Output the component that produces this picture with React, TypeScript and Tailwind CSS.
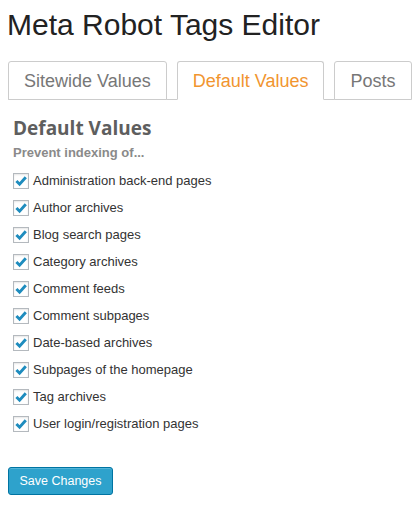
import { useState } from 'react';

const ITEMS = [
  'Administration back-end pages',
  'Author archives',
  'Blog search pages',
  'Category archives',
  'Comment feeds',
  'Comment subpages',
  'Date-based archives',
  'Subpages of the homepage',
  'Tag archives',
  'User login/registration pages',
];

const TABS = ['Sitewide Values', 'Default Values', 'Posts'];

export default function App() {
  const [tab, setTab] = useState(1);
  const [checked, setChecked] = useState<boolean[]>(ITEMS.map(() => true));

  const toggle = (i: number) =>
    setChecked((prev) => prev.map((v, j) => (j === i ? !v : v)));

  return (
    <div className="min-h-screen bg-white px-2 font-['Liberation_Sans',Arial,sans-serif]">
      {/* 제목 */}
      <h1 className="pt-[7px] text-[30px] leading-[36px] text-[#222] -ml-px whitespace-nowrap">Meta Robot Tags Editor</h1>

      {/* 탭 */}
      <div className="mt-[18px] flex gap-[10px] border-b border-[#ccc]">
        {TABS.map((t, i) => (
          <button
            key={t}
            onClick={() => setTab(i)}
            className={`-mb-px shrink-0 whitespace-nowrap rounded-t-[3px] border px-[15px] pt-[7px] pb-[6px] text-[18px] leading-[24px] ${
              tab === i
                ? 'border-[#ccc] border-b-white bg-white text-[#f1952f]'
                : 'border-[#ccc] bg-white text-[#777]'
            }`}
          >
            {t}
          </button>
        ))}
      </div>

      {/* 본문 */}
      <div className="pl-[5px]">
        <h2 className="mt-[16px] font-['Open_Sans',sans-serif] text-[19px] font-bold leading-[24px] text-[#5e5e5e]">
          Default Values
        </h2>
        <p className="mt-[5px] text-[13px] font-bold leading-[16px] text-[#8a8a8a]">Prevent indexing of...</p>

        <ul className="mt-[6px]">
          {ITEMS.map((item, i) => (
            <li key={item} className="flex h-[27px] items-center">
              <label className="flex cursor-pointer items-center gap-[4px] whitespace-nowrap text-[13px] leading-[16px] text-[#333]">
                <span
                  onClick={() => toggle(i)}
                  className="flex h-4 w-4 shrink-0 items-center justify-center border border-[#b4b9be] bg-white shadow-[inset_0_1px_2px_rgba(0,0,0,0.1)]"
                >
                  {checked[i] && (
                    <svg width="14" height="14" viewBox="0 0 14 14">
                      <path d="M2.4 7 L5.6 10.2 L11.8 3.2" fill="none" stroke="#1e8cbe" strokeWidth="2.9" strokeLinejoin="miter" />
                    </svg>
                  )}
                </span>
                {item}
              </label>
            </li>
          ))}
        </ul>
      </div>

      <button className="mt-[30px] h-[28px] w-[105px] whitespace-nowrap rounded-[3px] border border-[#0074a2] bg-[#2ea2cc] text-center text-[12.5px] leading-[26px] text-white shadow-[inset_0_1px_0_rgba(120,200,230,0.5)]">
        Save Changes
      </button>
    </div>
  );
}
